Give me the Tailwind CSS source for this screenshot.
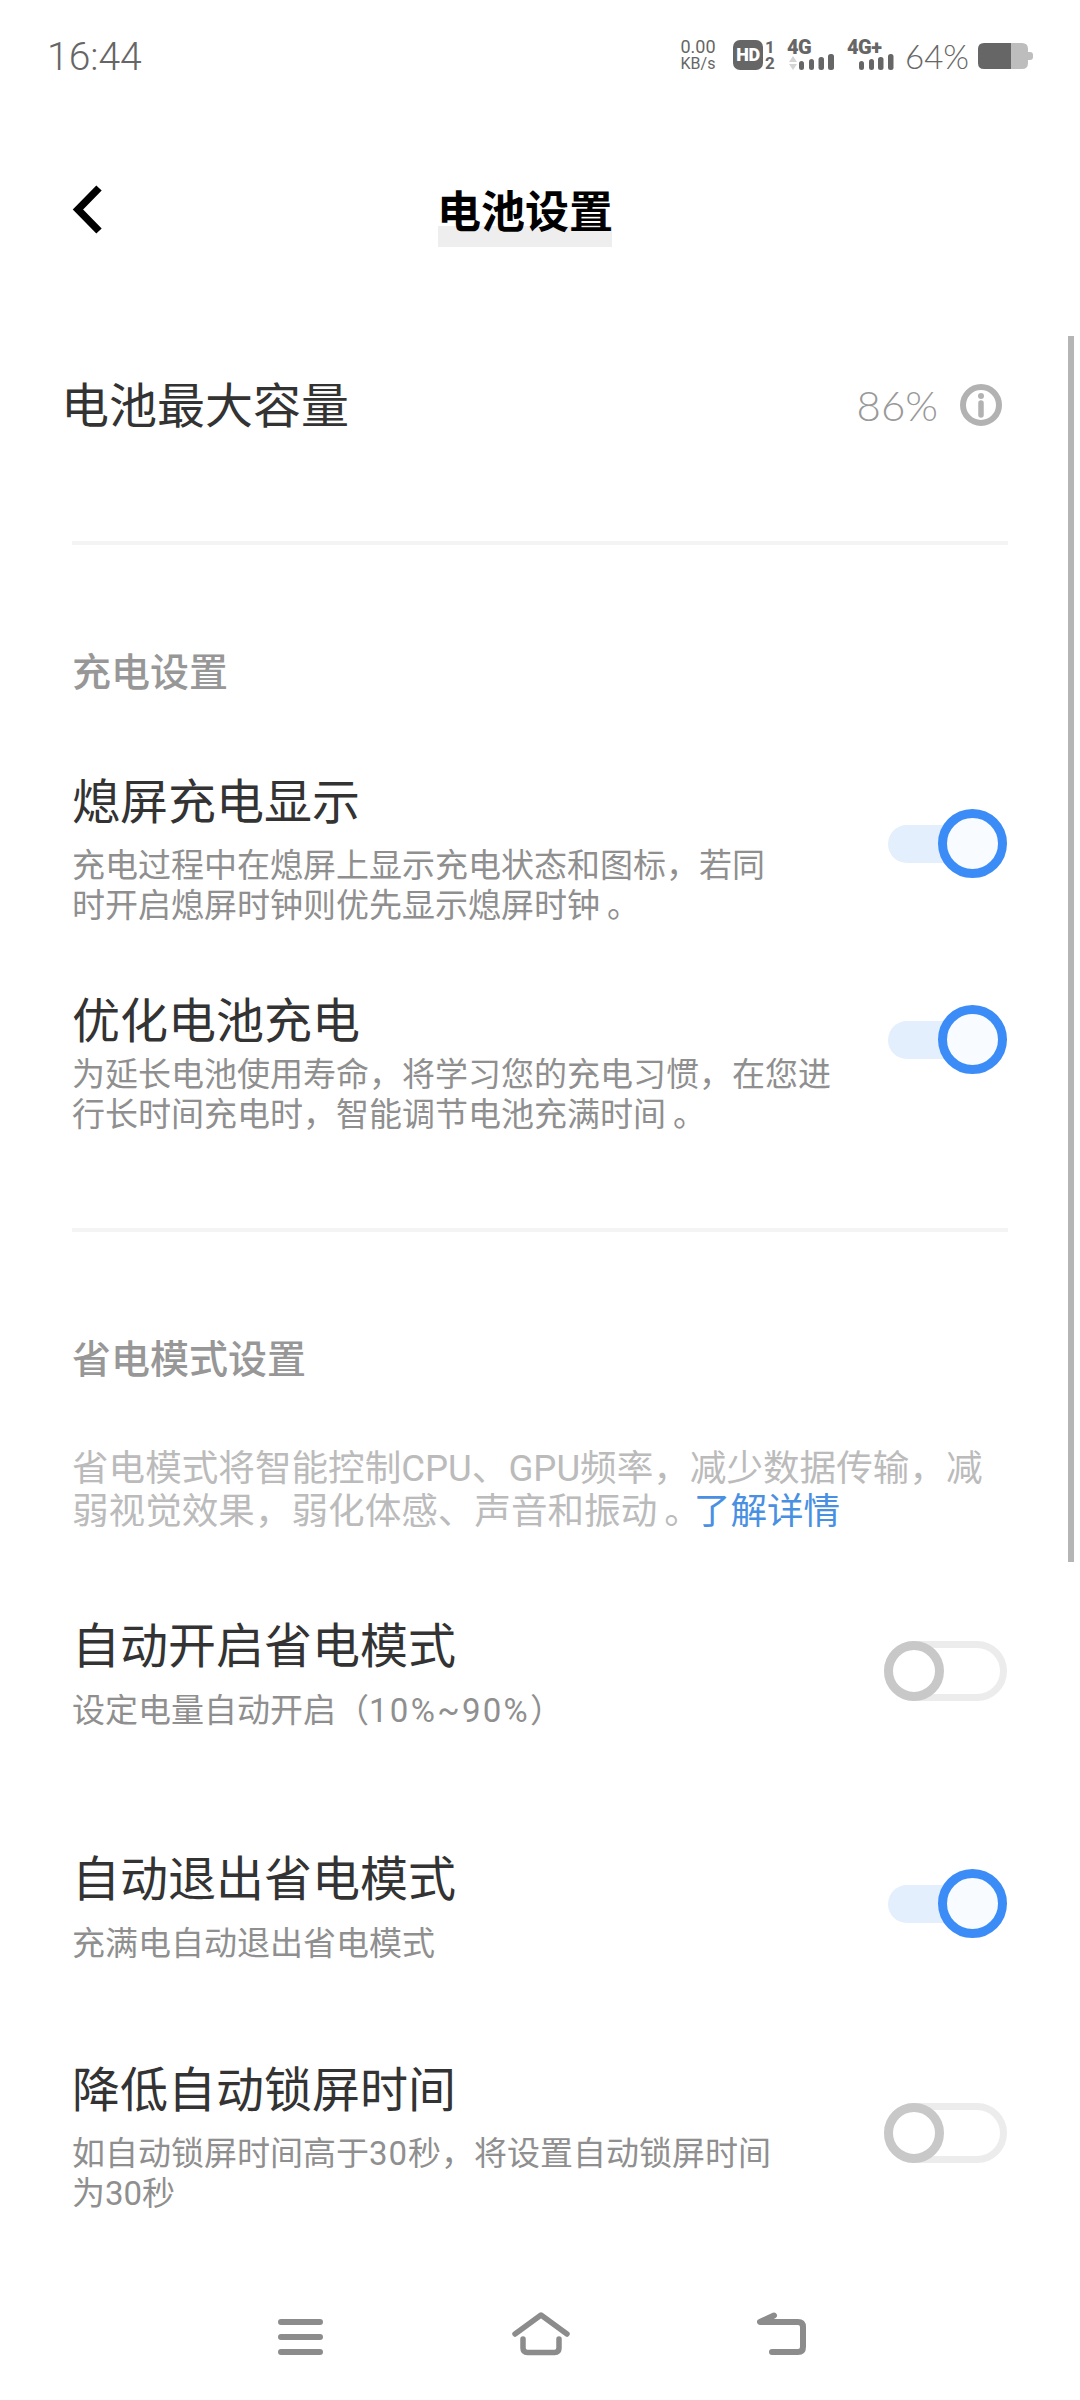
<!DOCTYPE html>
<html lang="zh-CN">
<head>
<meta charset="utf-8">
<script src="https://cdn.jsdelivr.net/npm/@tailwindcss/browser@4"></script>
</head>
<body class="bg-white">
<div class="relative w-[1080px] h-[2400px] overflow-hidden bg-white flex flex-col font-['Roboto','Noto_Sans_CJK_SC',sans-serif] text-[#333]">

  <!-- status bar -->
  <div class="h-[112px] shrink-0 pt-[40px] pl-[47px] pr-[47px] flex items-start justify-between text-[#666]">
    <span class="text-[39px] leading-[32px] font-light mt-[1px]">16:44</span>
    <div class="flex items-center h-[30px]">
      <div class="w-[38px] -ml-[4px] mr-[4px] flex flex-col items-center text-[18px] leading-[17px]">
        <span>0.00</span><span class="text-[16px]">KB/s</span>
      </div>
      <div class="ml-[12px] w-[30px] h-[30px] rounded-[7px] bg-[#666] flex items-center justify-center text-white text-[18px] font-black leading-none tracking-[-0.5px]">HD</div>
      <div class="ml-[2px] w-[10px] h-[30px] flex flex-col justify-between items-center text-[17px] leading-[14px] font-bold">
        <span>1</span><span>2</span>
      </div>
      <div class="ml-[12px] w-[47px] h-[30px] flex flex-col">
        <span class="text-[20px] leading-[14px] font-black tracking-[-0.5px]">4G</span>
        <svg width="47" height="16" viewBox="0 0 47 16" fill="#666">
          <path d="M6 2 L10 8 H2 Z M2 10 H10 L6 16 Z" fill="#d4d4d4"/>
          <rect x="12" y="7" width="5" height="9" rx="2.5"/>
          <rect x="22" y="5" width="5" height="11" rx="2.5"/>
          <rect x="31.500" y="3" width="5.500" height="13" rx="2.5"/>
          <rect x="41" y="0" width="6" height="16" rx="2.5"/>
        </svg>
      </div>
      <div class="ml-[13px] w-[47px] h-[30px] flex flex-col">
        <span class="text-[20px] leading-[14px] font-black tracking-[-0.5px]">4G+</span>
        <svg width="47" height="16" viewBox="0 0 47 16" fill="#666">
          <rect x="12" y="7" width="5" height="9" rx="2.5"/>
          <rect x="22" y="5" width="5" height="11" rx="2.5"/>
          <rect x="31" y="3" width="5.500" height="13" rx="2.5"/>
          <rect x="41" y="0" width="5.500" height="16" rx="2.5"/>
        </svg>
      </div>
      <span class="ml-[11px] w-[62px] text-[33px] leading-[30px] font-light mt-[2px] font-['Lato','Roboto',sans-serif] whitespace-nowrap">64%</span>
      <svg class="ml-[11px] mt-[2px]" width="55" height="26" viewBox="0 0 55 26">
        <path d="M6 0 H33 V26 H6 Q0 26 0 20 V6 Q0 0 6 0 Z" fill="#666"/>
        <path d="M33 0 H44 Q50 0 50 6 V20 Q50 26 44 26 H33 Z" fill="#bdbdbd"/>
        <path d="M50 9 H52 Q55 9 55 12 V14 Q55 17 52 17 H50 Z" fill="#bdbdbd"/>
      </svg>
    </div>
  </div>

  <!-- header -->
  <div class="relative h-[200px] shrink-0 pl-[437px] pt-[73px]">
    <svg class="absolute left-[72px] top-[73px]" width="32" height="50" viewBox="0 0 32 50" fill="none" stroke="#000" stroke-width="7.500">
      <path d="M27 3 L6 24.500 L27 46"/>
    </svg>
    <div class="absolute left-[438px] top-[114px] w-[174px] h-[21px] bg-[#eeeeee]"></div>
    <h1 class="relative text-[44px] leading-[56px] font-bold text-black whitespace-nowrap">电池设置</h1>
  </div>

  <!-- battery capacity -->
  <div class="h-[186px] shrink-0 pl-[61px] pr-[78px] flex items-center justify-between">
    <span class="text-[48px] leading-[56px] mt-[4px]">电池最大容量</span>
    <div class="flex items-center gap-[22px]">
      <span class="text-[42px] leading-[48px] font-light text-[#999999] font-['Lato','Roboto',sans-serif]">86%</span>
      <svg width="42" height="42" viewBox="0 0 42 42" fill="none">
        <circle cx="21" cy="21" r="18" stroke="#b2b2b2" stroke-width="6"/>
        <circle cx="21" cy="12" r="3" fill="#b2b2b2"/>
        <path d="M21 19 V31" stroke="#b2b2b2" stroke-width="5.500" stroke-linecap="round"/>
      </svg>
    </div>
  </div>

  <div class="mt-[43px] mx-[72px] h-[4px] shrink-0 bg-[#f4f4f4]"></div>

  <!-- charging -->
  <div class="mt-[104px] ml-[72px] text-[39px] leading-[48px] font-medium text-[#979797]">充电设置</div>

  <div class="mt-[78px] pl-[72px] pr-[73px] flex items-start justify-between">
    <div>
      <div class="text-[48px] leading-[56px]">熄屏充电显示</div>
      <div class="mt-[15px] text-[33px] leading-[40px] text-[#8f8f8f] whitespace-nowrap">充电过程中在熄屏上显示充电状态和图标，若同<br>时开启熄屏时钟则优先显示熄屏时钟<span class="ml-[7px] tracking-[-7px]">。</span></div>
    </div>
    <div class="mt-[34px] flex items-center">
      <div class="w-[80px] h-[38px] rounded-l-full bg-[#e3effc]"></div>
      <div class="-ml-[30px] w-[69px] h-[69px] rounded-full border-[9px] border-[#3c8cf8] bg-[#f8fbff]"></div>
    </div>
  </div>

  <div class="mt-[68px] pl-[72px] pr-[73px] flex items-start justify-between">
    <div>
      <div class="text-[48px] leading-[56px]">优化电池充电</div>
      <div class="mt-[5px] text-[33px] leading-[40px] text-[#8f8f8f] whitespace-nowrap">为延长电池使用寿命，将学习您的充电习惯，在您进<br>行长时间充电时，智能调节电池充满时间<span class="ml-[7px] tracking-[-7px]">。</span></div>
    </div>
    <div class="mt-[11px] flex items-center">
      <div class="w-[80px] h-[38px] rounded-l-full bg-[#e3effc]"></div>
      <div class="-ml-[30px] w-[69px] h-[69px] rounded-full border-[9px] border-[#3c8cf8] bg-[#f8fbff]"></div>
    </div>
  </div>

  <div class="mt-[93px] mx-[72px] h-[4px] shrink-0 bg-[#f4f4f4]"></div>

  <!-- power saving -->
  <div class="mt-[104px] ml-[72px] text-[39px] leading-[48px] font-medium text-[#979797]">省电模式设置</div>
  <div class="mt-[63px] ml-[72px] text-[36.6px] leading-[43px] text-[#bbbbbb] whitespace-nowrap">省电模式将智能控制CPU、GPU频率，减少数据传输，减<br>弱视觉效果，弱化体感、声音和振动<span class="ml-[7px] tracking-[-7px]">。</span><span class="text-[#4a90e2]">了解详情</span></div>

  <div class="mt-[86px] pl-[72px] pr-[73px] flex items-start justify-between">
    <div>
      <div class="text-[48px] leading-[56px]">自动开启省电模式</div>
      <div class="mt-[16px] text-[33px] leading-[40px] text-[#8f8f8f] whitespace-nowrap">设定电量自动开启（<span class="tracking-[2.3px]">10%~90%</span>）</div>
    </div>
    <div class="relative mt-[22px] w-[123px] h-[60px] rounded-full border-[7px] border-[#ececec]">
      <div class="absolute -left-[7px] -top-[7px] w-[60px] h-[60px] rounded-full border-[9px] border-[#c8c8c8] bg-white"></div>
    </div>
  </div>

  <div class="mt-[121px] pl-[72px] pr-[73px] flex items-start justify-between">
    <div>
      <div class="text-[48px] leading-[56px]">自动退出省电模式</div>
      <div class="mt-[16px] text-[33px] leading-[40px] text-[#8f8f8f] whitespace-nowrap">充满电自动退出省电模式</div>
    </div>
    <div class="mt-[17px] flex items-center">
      <div class="w-[80px] h-[38px] rounded-l-full bg-[#e3effc]"></div>
      <div class="-ml-[30px] w-[69px] h-[69px] rounded-full border-[9px] border-[#3c8cf8] bg-[#f8fbff]"></div>
    </div>
  </div>

  <div class="mt-[99px] pl-[72px] pr-[73px] flex items-start justify-between">
    <div>
      <div class="text-[48px] leading-[56px]">降低自动锁屏时间</div>
      <div class="mt-[15px] text-[33px] leading-[40px] text-[#8f8f8f] whitespace-nowrap">如自动锁屏时间高于<span class="tracking-[1px]">30</span>秒，将设置自动锁屏时间<br>为30秒</div>
    </div>
    <div class="relative mt-[40px] w-[123px] h-[60px] rounded-full border-[7px] border-[#ececec]">
      <div class="absolute -left-[7px] -top-[7px] w-[60px] h-[60px] rounded-full border-[9px] border-[#c8c8c8] bg-white"></div>
    </div>
  </div>

  <!-- nav -->
  <div class="mt-auto pb-[44px] pl-[278px] flex items-start">
    <svg width="45" height="44" viewBox="0 0 45 44" fill="none" stroke="#8c8c8c" stroke-width="6" stroke-linecap="round">
      <path d="M3 10 H42 M3 25 H42 M3 40 H42"/>
    </svg>
    <svg class="ml-[189px]" width="58" height="44" viewBox="0 0 58 44" fill="none" stroke="#8c8c8c" stroke-width="5.500" stroke-linecap="round" stroke-linejoin="round">
      <path d="M3 22 L29 3 L55 22"/>
      <path d="M11 27 V36 Q11 40.500 15.500 40.500 H42.500 Q47 40.500 47 36 V27"/>
    </svg>
    <svg class="ml-[187px]" width="50" height="44" viewBox="0 0 50 44" fill="none" stroke="#8c8c8c" stroke-width="6" stroke-linecap="round" stroke-linejoin="round">
      <path d="M17 3.500 L3 10 H41 Q46 10 46 15 V35 Q46 40 41 40 H15"/>
    </svg>
  </div>

  <!-- scrollbar -->
  <div class="absolute left-[1068px] top-[336px] w-[6px] h-[1226px] bg-[#b5b5b5]"></div>
</div>
</body>
</html>
